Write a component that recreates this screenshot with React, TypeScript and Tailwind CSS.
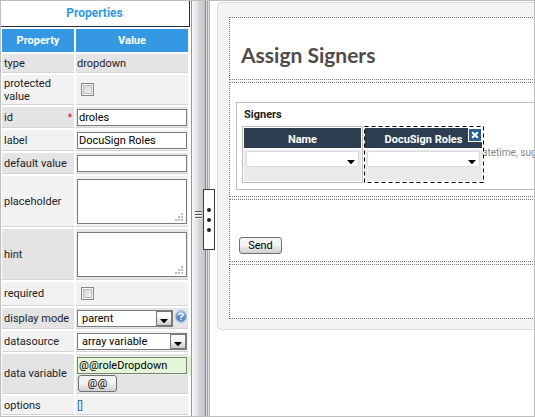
import type { ReactNode } from "react";

const inputBox =
  "block h-[17px] w-full border border-[#7c7c7c] bg-white px-px text-[11px] text-black outline-none";
const buttonBox =
  "flex h-[17px] items-center justify-center rounded-[3px] border border-[#707070] bg-linear-to-b from-[#f4f4f4] from-45% to-[#cfcfcf] text-[11px] text-black";

function Row({
  label,
  htmlFor,
  height,
  shaded,
  required,
  children,
}: {
  label: string;
  htmlFor?: string;
  height: string;
  shaded?: boolean;
  required?: boolean;
  children: ReactNode;
}) {
  const tone = shaded ? "bg-[#e4e4e4]" : "bg-[#f2f2f2]";
  return (
    <tr>
      <th
        scope="row"
        className={`${height} ${tone} border-b border-[#d4d4d4] pl-0.5 text-left align-middle font-normal`}
      >
        <div className="flex items-center justify-between pr-0.5">
          <label htmlFor={htmlFor} className="leading-[13px]">
            {label}
          </label>
          {required && <span className="text-[10px] leading-[13px] text-red-600">*</span>}
        </div>
      </th>
      <td className={`${tone} border-b border-[#d4d4d4] px-px align-middle`}>{children}</td>
    </tr>
  );
}

function Arrow() {
  return (
    <svg width="8" height="4" viewBox="0 0 8 4" aria-hidden="true">
      <path d="M0 0h8L4 4.4z" fill="#000" />
    </svg>
  );
}

function Checkbox({ id }: { id: string }) {
  return (
    <input
      id={id}
      type="checkbox"
      className="ml-1 block size-[13px] appearance-none border border-[#858585] bg-linear-to-br from-[#c9ccd1] to-[#fbfbfb] shadow-[inset_0_0_0_1px_#f4f4f4,inset_0_0_0_2px_#b9bcc1]"
    />
  );
}

function PropertySelect({ id, value }: { id: string; value: string }) {
  return (
    <div className="relative min-w-0 flex-1">
      <select
        id={id}
        className="block h-[17px] w-full appearance-none border border-[#7c7c7c] bg-white pl-1 text-[11px] leading-[15px] text-black"
      >
        <option>{value}</option>
      </select>
      <span className="pointer-events-none absolute inset-y-px right-px flex w-4 items-end justify-center border border-[#777] bg-linear-to-b from-[#fafafa] from-40% to-[#cccccc] pb-0.5">
        <Arrow />
      </span>
    </div>
  );
}

function PropertyTextarea({ id }: { id: string }) {
  return (
    <div className="relative">
      <textarea id={id} className="block h-[45px] w-full resize-none border border-[#7c7c7c] bg-white" />
      <svg className="absolute right-1 bottom-[3px]" width="8" height="8" viewBox="0 0 8 8" aria-hidden="true">
        <path
          d="M6 0h2v2H6zM3 3h2v2H3zM6 3h2v2H6zM0 6h2v2H0zM3 6h2v2H3zM6 6h2v2H6z"
          fill="#bdbdbd"
        />
      </svg>
    </div>
  );
}

function HelpIcon() {
  return (
    <svg width="12" height="13" viewBox="0 0 12 13" aria-hidden="true">
      <defs>
        <linearGradient id="helpFill" x1="0" y1="0" x2="0" y2="1">
          <stop offset="0" stopColor="#8fb6e0" />
          <stop offset="1" stopColor="#4377b5" />
        </linearGradient>
      </defs>
      <ellipse cx="6" cy="6.5" rx="6" ry="6.5" fill="#a4c2e4" />
      <circle cx="6" cy="6.4" r="5" fill="url(#helpFill)" />
      <path d="M3.9 5C4 2.6 8.1 2.7 8 5 7.9 6.3 6.1 6.3 6.1 7.9" fill="none" stroke="#fff" strokeWidth="1.5" />
      <path d="M5.3 8.8h1.5v1.5H5.3z" fill="#fff" />
    </svg>
  );
}

function PropertiesPanel() {
  return (
    <aside className="w-[191px] shrink-0 bg-white">
      <h2 className="mr-px flex h-[27px] items-center justify-center border-r border-b border-[#2b2b38] text-xs font-bold text-[#3498e0]">
        Properties
      </h2>
      <table className="w-[190px] table-fixed border-separate border-spacing-[2px] text-[#222]">
        <colgroup>
          <col className="w-[72px]" />
          <col />
        </colgroup>
        <thead>
          <tr className="text-center text-white">
            <th className="h-[23px] bg-[#3498e2] p-0 font-bold">Property</th>
            <th className="bg-[#3498e2] p-0 font-bold">Value</th>
          </tr>
        </thead>
        <tbody>
          <Row label="type" height="h-[19px]" shaded>
            dropdown
          </Row>
          <Row label="protected value" htmlFor="protected" height="h-[30px]">
            <Checkbox id="protected" />
          </Row>
          <Row label="id" htmlFor="fieldId" height="h-[21px]" shaded required>
            <input id="fieldId" type="text" defaultValue="droles" className={inputBox} />
          </Row>
          <Row label="label" htmlFor="fieldLabel" height="h-[21px]">
            <input id="fieldLabel" type="text" defaultValue="DocuSign Roles" className={inputBox} />
          </Row>
          <Row label="default value" htmlFor="defaultValue" height="h-[21px]" shaded>
            <input id="defaultValue" type="text" className={inputBox} />
          </Row>
          <Row label="placeholder" htmlFor="placeholderText" height="h-[51px]">
            <PropertyTextarea id="placeholderText" />
          </Row>
          <Row label="hint" htmlFor="hint" height="h-[51px]" shaded>
            <PropertyTextarea id="hint" />
          </Row>
          <Row label="required" htmlFor="required" height="h-[24px]">
            <Checkbox id="required" />
          </Row>
          <Row label="display mode" htmlFor="displayMode" height="h-[21px]" shaded>
            <div className="flex items-start gap-0.5">
              <PropertySelect id="displayMode" value="parent" />
              <HelpIcon />
            </div>
          </Row>
          <Row label="datasource" htmlFor="datasource" height="h-[21px]">
            <div className="flex">
              <PropertySelect id="datasource" value="array variable" />
            </div>
          </Row>
          <Row label="data variable" htmlFor="dataVariable" height="h-[40px]" shaded>
            <div className="-mr-1 -ml-px bg-[#e2f3d6] py-px pr-1 pl-px">
              <input
                id="dataVariable"
                type="text"
                defaultValue="@@roleDropdown"
                className="block h-[17px] w-full border border-[#7c7c7c] bg-[#e4f5d8] px-px text-[11px] text-black outline-none"
              />
            </div>
            <button type="button" className={`${buttonBox} ml-px w-[39px]`}>
              @@
            </button>
          </Row>
          <Row label="options" height="h-[19px]">
            <a href="#options" className="text-[#1a6fb0] underline">
              []
            </a>
          </Row>
        </tbody>
      </table>
    </aside>
  );
}

function Splitter() {
  return (
    <div className="relative flex w-[19px] shrink-0">
      <div className="w-px bg-[#979797]" />
      <div className="w-1.5 bg-linear-to-r from-[#f8f8f8] to-[#e0e0e1]" />
      <div className="w-[7px] bg-linear-to-r from-[#d6d6da] to-[#c3c3c9]" />
      <div className="w-px bg-[#858585]" />
      <div className="w-px bg-[#dddddd]" />
      <div className="w-px bg-[#a0a0a0]" />
      <div className="w-px bg-[#dedede]" />
      <div className="w-px bg-[#b4b4b4]" />
      <svg className="absolute top-[211px] left-1" width="7" height="8" viewBox="0 0 7 8" aria-hidden="true">
        <path d="M0 0h7v1H0zM0 3h7v1H0zM0 6h7v1H0z" fill="#555" />
        <path d="M0 1h7v1H0zM0 4h7v1H0zM0 7h7v1H0z" fill="#f5f5f5" />
      </svg>
      <button
        type="button"
        aria-label="Collapse panel"
        className="absolute top-[189px] left-3 z-10 flex h-[61px] w-3 flex-col items-center justify-center gap-1.5 border border-[#3a3a45] bg-white"
      >
        <span className="size-1 rounded-full bg-[#1d1d2b]" />
        <span className="size-1 rounded-full bg-[#1d1d2b]" />
        <span className="size-1 rounded-full bg-[#1d1d2b]" />
      </button>
    </div>
  );
}

function GridColumn({ title, selected }: { title: string; selected?: boolean }) {
  return (
    <div
      className={
        selected
          ? "relative h-[57px] w-[120px] border border-dashed border-black pt-px pr-px"
          : "relative h-[57px] w-[121px] border border-[#bcbcbc] p-px"
      }
    >
      {selected && (
        <svg className="pointer-events-none absolute -top-px -left-px" width="120" height="57" aria-hidden="true">
          <path d="M0.5 0.5H119.5V56.5H0.5z" fill="none" stroke="#fff" />
          <path d="M0.5 0.5H119.5V56.5H0.5z" fill="none" stroke="#000" strokeDasharray="4 3" />
        </svg>
      )}
      <div className="flex h-5 items-center justify-center bg-[#2c3e50] pt-0.5 font-bold text-white">
        {title}
      </div>
      <div className="mt-0.5 h-[31px] bg-[#e9eaec] px-0.5 pt-px">
        <div className="relative">
          <select
            aria-label={title}
            className="block h-4 w-full appearance-none rounded-[2px] border border-[#d9dde3] bg-white text-[11px]"
          >
            <option></option>
          </select>
          <span className="pointer-events-none absolute right-1 bottom-[3px] flex">
            <Arrow />
          </span>
        </div>
      </div>
      {selected && (
        <button
          type="button"
          aria-label="Remove column"
          className="absolute top-px right-px flex size-[14px] items-center justify-center border border-white bg-[#2b6089]"
        >
          <svg width="8" height="8" viewBox="0 0 8 8" aria-hidden="true">
            <path d="M1.2 1.2l5.6 5.6M6.8 1.2L1.2 6.8" stroke="#fff" strokeWidth="2" />
          </svg>
        </button>
      )}
    </div>
  );
}

function FormCanvas() {
  const section = "border border-r-0 border-dotted border-[#777] bg-white";
  return (
    <main className="min-w-0 flex-1 overflow-hidden bg-white pt-0.5 pl-[7px]">
      <div className="flex flex-col gap-0.5 rounded-l-[5px] border border-r-0 border-[#d9d9d9] bg-[#f5f4f2] pt-3.5 pb-2.5 pl-[11px]">
        <section className={`${section} flex h-[63px] items-center pt-3 pl-[11px]`}>
          <h1 className="font-[Lato,sans-serif] text-[21px] leading-6 font-bold text-[#504b4b]">Assign Signers</h1>
        </section>
        <section className={`${section} h-[115px] pt-[19px] pl-1.5`}>
          <div className="h-[88px] border border-r-0 border-[#bcbcbc] pl-[5px]">
            <h3 className="flex h-[23px] items-center pl-0.5 font-bold text-[#222]">Signers</h3>
            <div className="flex">
              <GridColumn title="Name" />
              <div className="ml-px flex">
                <GridColumn title="DocuSign Roles" selected />
              </div>
              <p className="-ml-1 min-w-0 flex-1 pt-5 pl-0.5 text-[10px] leading-[13px] whitespace-nowrap text-[#858585]">
                atetime, sug
              </p>
            </div>
          </div>
        </section>
        <section className={`${section} h-[63px] pt-[37px] pl-[9px]`}>
          <button type="button" className={`${buttonBox} w-[43px]`}>
            Send
          </button>
        </section>
        <section className={`${section} h-[55px]`} />
      </div>
    </main>
  );
}

export default function App() {
  return (
    <div className="relative flex h-screen overflow-hidden bg-white font-[Roboto,'Liberation_Sans',Arial,sans-serif] text-[11px] leading-[13px]">
      <PropertiesPanel />
      <Splitter />
      <FormCanvas />
      <div className="pointer-events-none absolute inset-0 z-20 border border-[#bdbdbd]" />
    </div>
  );
}
